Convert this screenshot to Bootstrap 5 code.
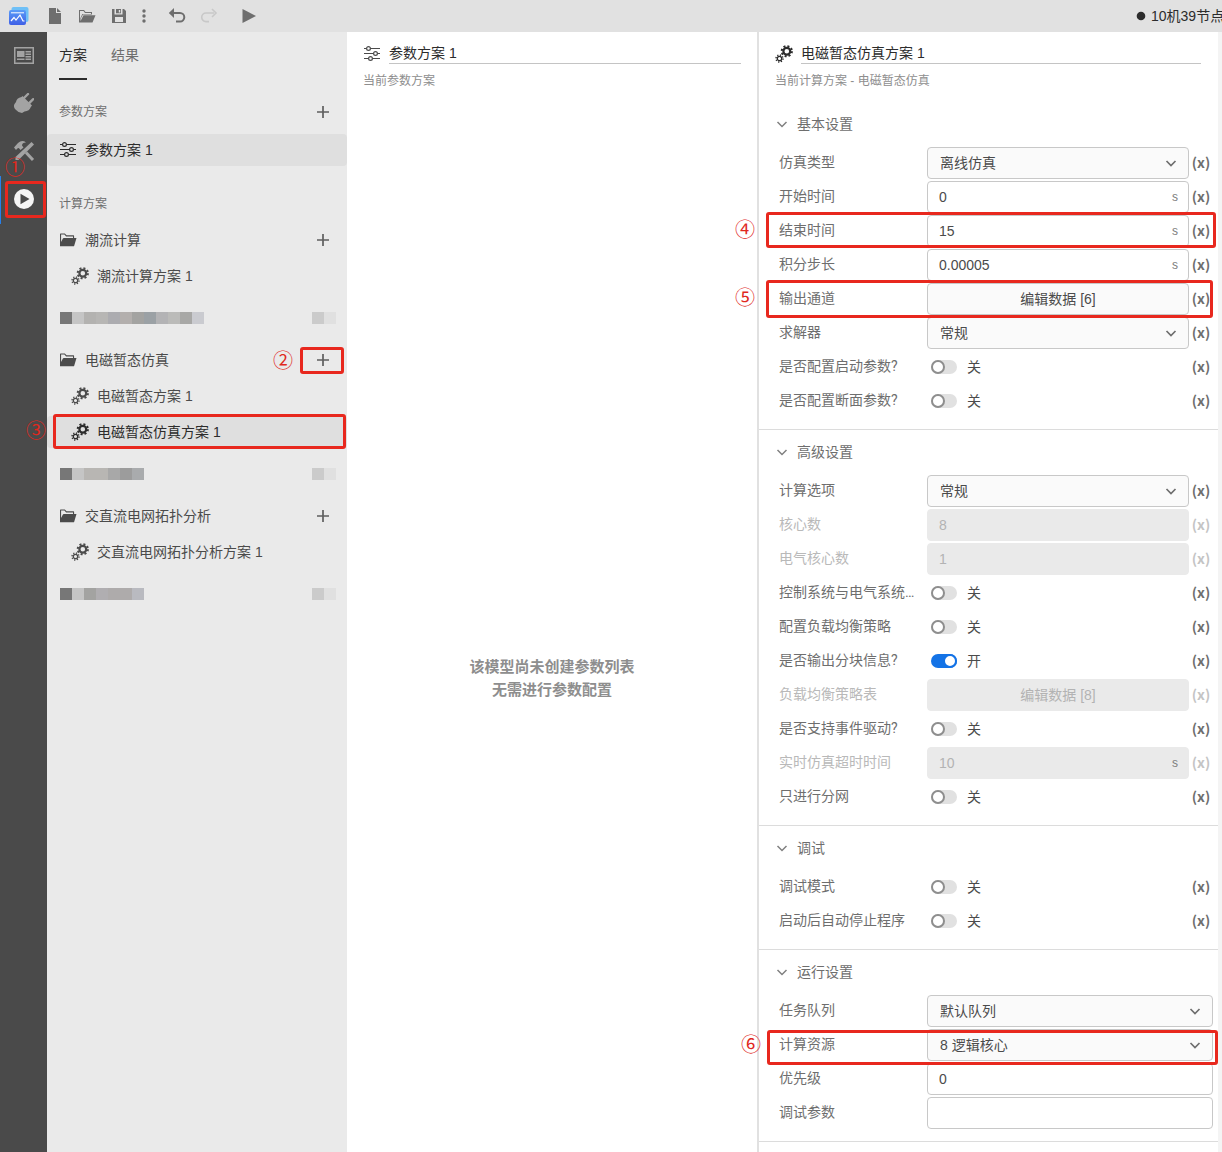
<!DOCTYPE html>
<html lang="zh-CN">
<head>
<meta charset="utf-8">
<meta name="viewport" content="width=device-width, initial-scale=1">
<title>10机39节点</title>
<link href="https://cdn.jsdelivr.net/npm/bootstrap@5.3.0/dist/css/bootstrap.min.css" rel="stylesheet">
<style>
body{font-family:"Liberation Sans","Noto Sans CJK SC",sans-serif;font-size:14px;line-height:20px;color:#4b4b4b;background:#fff}
svg{display:block;flex:none}
button{font-family:inherit}
.topbar{height:32px;background:#e1e1e1;color:#2c2c2c}
.tool{width:32px;height:32px;border:0;background:none;padding:0;display:flex;align-items:center;justify-content:center;color:#6e6e6e}
.tool-slim{width:18px}
.tool:disabled{color:#c8c8c8}
.logo-link{width:39px;padding-left:8px}
.doc-name{width:86px;gap:5px}
.doc-name span{white-space:nowrap}
.rail{width:47px;background:#4a4a4a}
.rail a{height:48px;color:#a3a3a3;display:flex;align-items:center;justify-content:center;position:relative;padding-bottom:2px}
.rail a.active{color:#f5f5f5;box-shadow:inset 1px 0 #2680eb}
.side{width:300px;background:#eaeaea}
.tabs{padding-left:12px;gap:24px}
.tabs a{height:48px;line-height:46px;color:#6e6e6e;text-decoration:none;border-bottom:2px solid transparent}
.tabs a.active{color:#2c2c2c;border-color:#2c2c2c}
.side-head{height:32px;margin-top:16px;padding:0 12px;font-size:12px;color:#6e6e6e}
.side-head-plans{margin-top:24px;padding-bottom:4px}
.plan{height:32px;margin:2px 0;padding-left:12px;gap:8px;border-radius:4px;color:inherit;text-decoration:none;display:flex;align-items:center;position:relative}
.plan-first{margin-top:6px}
.plan-sub{padding-left:24px}
.plan.active{background:#dfdfdf;color:#2c2c2c}
.side-group{margin-bottom:6px;display:flow-root}
.group-head{height:36px;padding:0 12px}
.masked{height:36px;padding:0 11px 0 13px;margin-bottom:6px}
.add{width:24px;height:24px;border:0;background:none;padding:0;color:#5f5f5f;display:flex;align-items:center;justify-content:center;position:relative}
.params{min-width:0;background:#fff}
.pane-head{padding:11px 16px 0}
.name-field{height:21px;border:0;border-bottom:1px solid #c4c4c4;border-radius:0;padding:0 0 2px;font-size:14px;color:#2c2c2c;background:none;min-width:0;flex:1}
.sub-note{font-size:12px;line-height:18px;margin-top:8px;color:#8e8e8e}
.above{flex:5}.below{flex:4}
.empty{font-size:15px;line-height:23px;padding-top:2px;color:#8e8e8e}
.config{width:465px;border-left:2px solid #e1e1e1;border-right:4px solid #f4f4f4;position:relative;z-index:1}
.config .pane-head{padding-right:17px;margin-bottom:12px}
.sect{padding:0 5px 12px 20px;border-bottom:1px solid #dcdcdc}
.sect-title{height:45px;border:0;background:none;padding:0 0 2px;gap:9px;color:#6e6e6e;font-size:14px;margin-left:-3px}
.field{height:32px;margin-bottom:2px;display:flex;align-items:center;position:relative}
.field:last-child{margin-bottom:0}
.field-name{width:136px;margin-right:12px;padding-bottom:2px;color:#6e6e6e;font-family:Roboto,"Noto Sans CJK SC",sans-serif}
.box{flex:1;min-width:0;height:32px;border:1px solid #c8c8c8;border-radius:4px;padding:0 11px;font-size:14px;line-height:20px;color:#4b4b4b;background-color:#fff}
select.box{background:#fafafa url("data:image/svg+xml,%3Csvg xmlns='http://www.w3.org/2000/svg' viewBox='0 0 12 12'%3E%3Cpath d='M1.500 4l4.500 4.500L10.500 4' fill='none' stroke='%236e6e6e' stroke-width='1.700'/%3E%3C/svg%3E") no-repeat right 11px center/12px;padding-left:12px}
button.box{background:#fafafa}
.box:disabled{background:#eaeaea;border-color:#eaeaea;color:#b3b3b3;opacity:1}
.unit-wrap{flex:1;min-width:0;position:relative;display:flex}
.unit{position:absolute;right:11px;top:6px;font-size:12px;color:#7c7c7c}
.toggle-wrap{flex:1;padding-left:4px;gap:10px}
.form-check-input.toggle{width:26px;height:14px;margin:0;border:0;border-radius:7px;background:#e1e1e1;position:relative;flex:none}
.toggle::before{content:"";position:absolute;left:0;top:0;width:14px;height:14px;border:2px solid #8e8e8e;border-radius:50%;background:#fff}
.form-check-input.toggle:checked{background:#1473e6}
.toggle:checked::before{left:12px;border-color:#1473e6}
.var-btn{width:24px;border:0;background:none;padding:0 0 2px;font:700 14px/20px "Noto Sans CJK SC",sans-serif;color:#6e6e6e}
.off .field-name{color:#b9b9b9}
.off .var-btn{color:#c4c4c4}
.hint-box{position:absolute;border:3px solid #e8281e;border-radius:3px;pointer-events:none;z-index:3}
.hint-no{position:absolute;font:20px/20px "Noto Sans CJK SC",sans-serif;color:#e0281e;z-index:3;pointer-events:none}
.box-run{inset:5px 1px 6px 5px}.no-run{left:5px;top:-19px}
.box-add{inset:-1px -9px -2px -11px}.no-add{right:42px;top:2px}
.box-plan{inset:-2px 1px -1px 6px}.no-plan{left:-21px;top:4px}
.box-end{inset:-3px -3px -1px -13px}
.box-out{inset:-3px 0 -3px -13px}
.box-res{inset:1px -5px -4px -12px}
.no-field{left:-44px;top:4px}
.no-res{left:-38px;top:5px}
</style>
</head>
<body class="d-flex flex-column min-vh-100">
<svg width="0" height="0" class="position-absolute" aria-hidden="true">
  <symbol id="gears" viewBox="0 0 18 18"><g fill="none" stroke="currentColor"><circle cx="11.800" cy="6.200" r="3.400" stroke-width="2.200"/><circle cx="11.800" cy="6.200" r="5.100" stroke-width="2" stroke-dasharray="2 2.005"/><circle cx="4.500" cy="13.500" r="2.200" stroke-width="1.300"/><circle cx="4.500" cy="13.500" r="3.500" stroke-width="1.400" stroke-dasharray="1.200 1.549"/></g></symbol>
  <symbol id="sliders" viewBox="0 0 18 18"><g fill="none" stroke="currentColor" stroke-width="1.200"><path d="M1 3.500h2.500M7.500 3.500H17M1 8.500h9.500M14.500 8.500H17M1 13.500h4.500M9.500 13.500H17"/><circle cx="5.500" cy="3.500" r="1.900"/><circle cx="12.500" cy="8.500" r="1.900"/><circle cx="7.500" cy="13.500" r="1.900"/></g></symbol>
  <symbol id="folder" viewBox="0 0 18 18"><path fill="currentColor" d="M1 15.300V3q0-.6.6-.6H5.800L7.600 4.300H14.500q.6 0 .6.600V7H14V5.400H7.100L5.400 3.500H2.100V11L3.900 7.500q.3-.5.900-.5H17.500L15.200 14.700q-.2.600-.9.600Z"/></symbol>
  <symbol id="plus" viewBox="0 0 12 12"><path d="M6 0v12M0 6h12" stroke="currentColor" stroke-width="1.700"/></symbol>
  <symbol id="chev" viewBox="0 0 12 12"><path d="M1.500 4L6 8.500 10.500 4" fill="none" stroke="#808080" stroke-width="1.500"/></symbol>
</svg>

<header class="topbar d-flex align-items-center">
  <a href="#" class="logo-link" aria-label="首页"><svg width="22" height="20" viewBox="0 0 22 20"><defs><linearGradient id="lg" x1="0" y1="0" x2="0" y2="1"><stop offset="0" stop-color="#5a9cf8"/><stop offset="1" stop-color="#3f5fe6"/></linearGradient></defs><rect x="3.500" y="1" width="17" height="15" rx="2" fill="#6fc0f7"/><rect x="1" y="4" width="17" height="15" rx="2" fill="url(#lg)"/><path d="M3 6.800h13" stroke="#fff" stroke-width="1"/><path d="M3 15l3-3.500 2 2.500 4-5 3 6h1.500" fill="none" stroke="#fff" stroke-width="1.200"/></svg></a>
  <button class="tool" aria-label="新建"><svg width="16" height="16" fill="currentColor"><path d="M2 0h7v5h5v11H2zM10 0l4 4h-4z"/></svg></button>
  <button class="tool" aria-label="打开"><svg width="18" height="16" fill="currentColor"><path d="M1 14.500V2h5l1.500 2H14v2.500H5L2.500 11V13L5.500 7.300H17.500L14.500 14.500ZM2 3v8l2.300-5H13V5H7L5.500 3Z" fill-rule="evenodd"/></svg></button>
  <button class="tool" aria-label="保存"><svg width="16" height="16" fill="currentColor"><path fill-rule="evenodd" d="M1 1h2.500v5.500h8V1H13l2 2v12H1zM5 1h5v4.300H5zM7.800 2v2.500h1.400V2zM4 9v5h8V9z"/></svg></button>
  <button class="tool tool-slim" aria-label="更多"><svg width="4" height="14" fill="currentColor"><circle cx="2" cy="2" r="1.700"/><circle cx="2" cy="7" r="1.700"/><circle cx="2" cy="12" r="1.700"/></svg></button>
  <button class="tool ms-2" aria-label="撤销"><svg width="18" height="16" fill="none" stroke="currentColor" stroke-width="2"><path d="M4 5h8a4.300 4.300 0 010 8.600H8"/><path d="M6 0v10L.8 5z" fill="currentColor" stroke="none"/></svg></button>
  <button class="tool" aria-label="重做" disabled><svg width="18" height="16" fill="none" stroke="currentColor" stroke-width="1.600"><path d="M14 5H6a4.300 4.300 0 000 8.600h3M12 1l4 4-4 4"/></svg></button>
  <button class="tool ms-2" aria-label="运行"><svg width="16" height="16" fill="currentColor"><path d="M1.500 1l13.500 7-13.500 7z"/></svg></button>
  <div class="doc-name d-flex align-items-center ms-auto overflow-hidden"><svg width="10" height="10"><circle cx="5" cy="5" r="4.300" fill="#2c2c2c"/></svg><span>10机39节点</span></div>
</header>

<div class="d-flex flex-grow-1">
  <nav class="rail flex-shrink-0" aria-label="主导航">
    <a href="#" aria-label="概览"><svg width="20" height="17" fill="currentColor"><path fill-rule="evenodd" d="M0 0h20v17H0zM1.500 1.500v14h17v-14z"/><path d="M3 4h7.500v6H3zM11.500 4H17v1.500h-5.500zM11.500 6.500H17V8h-5.500zM11.500 9H17v1.500h-5.500zM3 11.500h7.500V13H3zM11.500 11.500H17V13h-5.500z"/></svg></a>
    <a href="#" aria-label="接口"><svg width="20" height="20" fill="currentColor"><path d="M8.500 3L18 12.500 16.800 14Q15.500 18 10.500 18.500L8 20Q4 19.500 1.500 16.500T.5 11L2 9Q2.500 5 7.500 4z"/><path d="M10 5l4-4M15.200 10.200l4-4" stroke="currentColor" stroke-width="2.400" stroke-linecap="round"/></svg></a>
    <a href="#" aria-label="工具"><svg width="22" height="22" fill="currentColor"><path d="M1 7.500L5 3q4-3.500 8-.5Q9 2.500 9 5.500L10.500 7.500 7.500 10 5.800 8Q4.500 7.800 3 10z"/><path d="M18.500 2L21 4.500 5.500 20H2.500v-3z"/><path d="M13 12.500l7 7.500" stroke="currentColor" stroke-width="3"/></svg></a>
    <a href="#" class="active" aria-label="运行"><svg width="20" height="20"><circle cx="10" cy="10" r="10" fill="currentColor"/><path d="M6.500 4.800L15.500 10l-9 5.200z" fill="#4a4a4a"/></svg><span class="hint-box box-run"></span><span class="hint-no no-run">①</span></a>
  </nav>

  <aside class="side flex-shrink-0">
    <nav class="tabs d-flex"><a href="#" class="active">方案</a><a href="#">结果</a></nav>
    <div class="side-head d-flex align-items-center justify-content-between"><span>参数方案</span><button class="add" aria-label="新增参数方案"><svg width="12" height="12"><use href="#plus"/></svg></button></div>
    <a href="#" class="plan plan-first active"><svg width="18" height="18"><use href="#sliders"/></svg>参数方案 1</a>
    <div class="side-head side-head-plans d-flex align-items-center">计算方案</div>

    <div class="side-group">
      <div class="group-head d-flex align-items-center gap-2"><svg width="18" height="18"><use href="#folder"/></svg>潮流计算<button class="add ms-auto" aria-label="新增潮流计算方案"><svg width="12" height="12"><use href="#plus"/></svg></button></div>
      <a href="#" class="plan plan-sub"><svg width="18" height="18"><use href="#gears"/></svg>潮流计算方案 1</a>
    </div>
    <div class="masked d-flex align-items-center justify-content-between">
      <svg width="144" height="12"><path fill="#777" d="M0 0h12v12H0z"/><path fill="#c5c5c5" d="M12 0h12v12H12z"/><path fill="#b3b2b0" d="M24 0h12v12H24z"/><path fill="#b7b6b4" d="M36 0h12v12H36z"/><path fill="#acacb0" d="M48 0h12v12H48z"/><path fill="#b3afad" d="M60 0h12v12H60z"/><path fill="#a3a3a1" d="M72 0h12v12H72z"/><path fill="#9ba1a5" d="M84 0h12v12H84z"/><path fill="#b3b3b5" d="M96 0h12v12H96z"/><path fill="#bbbbb9" d="M108 0h12v12h-12z"/><path fill="#a8a8a6" d="M120 0h12v12h-12z"/><path fill="#cacbd0" d="M132 0h12v12h-12z"/></svg>
      <svg width="24" height="12"><path fill="#cbcbcb" d="M0 0h12v12H0z"/><path fill="#e0e0e0" d="M12 0h12v12H12z"/></svg>
    </div>
    <div class="side-group">
      <div class="group-head d-flex align-items-center gap-2"><svg width="18" height="18"><use href="#folder"/></svg>电磁暂态仿真<button class="add ms-auto" aria-label="新增电磁暂态仿真方案"><svg width="12" height="12"><use href="#plus"/></svg><span class="hint-box box-add"></span><span class="hint-no no-add">②</span></button></div>
      <a href="#" class="plan plan-sub"><svg width="18" height="18"><use href="#gears"/></svg>电磁暂态方案 1</a>
      <a href="#" class="plan plan-sub active mt-1"><svg width="18" height="18"><use href="#gears"/></svg>电磁暂态仿真方案 1<span class="hint-box box-plan"></span><span class="hint-no no-plan">③</span></a>
    </div>
    <div class="masked d-flex align-items-center justify-content-between">
      <svg width="84" height="12"><path fill="#777" d="M0 0h12v12H0z"/><path fill="#c5c5c5" d="M12 0h12v12H12z"/><path fill="#b8b6b3" d="M24 0h24v12H24z"/><path fill="#a8a8a8" d="M48 0h12v12H48z"/><path fill="#9c9c9c" d="M60 0h12v12H60z"/><path fill="#a9abad" d="M72 0h12v12H72z"/></svg>
      <svg width="24" height="12"><path fill="#cbcbcb" d="M0 0h12v12H0z"/><path fill="#e0e0e0" d="M12 0h12v12H12z"/></svg>
    </div>
    <div class="side-group">
      <div class="group-head d-flex align-items-center gap-2"><svg width="18" height="18"><use href="#folder"/></svg>交直流电网拓扑分析<button class="add ms-auto" aria-label="新增拓扑分析方案"><svg width="12" height="12"><use href="#plus"/></svg></button></div>
      <a href="#" class="plan plan-sub"><svg width="18" height="18"><use href="#gears"/></svg>交直流电网拓扑分析方案 1</a>
    </div>
    <div class="masked d-flex align-items-center justify-content-between">
      <svg width="84" height="12"><path fill="#777" d="M0 0h12v12H0z"/><path fill="#c5c5c5" d="M12 0h12v12H12z"/><path fill="#a3a3a1" d="M24 0h12v12H24z"/><path fill="#b0aeb1" d="M36 0h12v12H36z"/><path fill="#aeabab" d="M48 0h24v12H48z"/><path fill="#b9bac0" d="M72 0h12v12H72z"/></svg>
      <svg width="24" height="12"><path fill="#cbcbcb" d="M0 0h12v12H0z"/><path fill="#e0e0e0" d="M12 0h12v12H12z"/></svg>
    </div>
  </aside>

  <main class="params flex-fill d-flex flex-column">
    <div class="pane-head">
      <div class="d-flex align-items-center gap-2"><svg width="18" height="18"><use href="#sliders"/></svg><input class="name-field" value="参数方案 1" aria-label="参数方案名称"></div>
      <div class="sub-note">当前参数方案</div>
    </div>
    <div class="above"></div>
    <div class="empty text-center fw-bold">该模型尚未创建参数列表<br>无需进行参数配置</div>
    <div class="below"></div>
  </main>

  <section class="config flex-shrink-0">
    <div class="pane-head">
      <div class="d-flex align-items-center gap-2"><svg width="18" height="18" color="#2c2c2c"><use href="#gears"/></svg><input class="name-field" value="电磁暂态仿真方案 1" aria-label="计算方案名称"></div>
      <div class="sub-note">当前计算方案 - 电磁暂态仿真</div>
    </div>

    <div class="sect">
      <button class="sect-title d-flex align-items-center"><svg width="12" height="12"><use href="#chev"/></svg>基本设置</button>
      <div>
        <div class="field"><label class="field-name text-truncate" for="f1">仿真类型</label><select class="form-select box" id="f1"><option>离线仿真</option></select><button class="var-btn">(x)</button></div>
        <div class="field"><label class="field-name text-truncate" for="f2">开始时间</label><div class="unit-wrap"><input class="form-control box" id="f2" value="0"><span class="unit">s</span></div><button class="var-btn">(x)</button></div>
        <div class="field"><label class="field-name text-truncate" for="f3">结束时间</label><div class="unit-wrap"><input class="form-control box" id="f3" value="15"><span class="unit">s</span></div><button class="var-btn">(x)</button><span class="hint-box box-end"></span><span class="hint-no no-field">④</span></div>
        <div class="field"><label class="field-name text-truncate" for="f4">积分步长</label><div class="unit-wrap"><input class="form-control box" id="f4" value="0.00005"><span class="unit">s</span></div><button class="var-btn">(x)</button></div>
        <div class="field"><label class="field-name text-truncate" for="f5">输出通道</label><button class="box" id="f5">编辑数据 [6]</button><button class="var-btn">(x)</button><span class="hint-box box-out"></span><span class="hint-no no-field">⑤</span></div>
        <div class="field"><label class="field-name text-truncate" for="f6">求解器</label><select class="form-select box" id="f6"><option>常规</option></select><button class="var-btn">(x)</button></div>
        <div class="field"><label class="field-name text-truncate" for="f7">是否配置启动参数?</label><div class="toggle-wrap d-flex align-items-center"><input type="checkbox" role="switch" class="form-check-input toggle" id="f7"><span>关</span></div><button class="var-btn">(x)</button></div>
        <div class="field"><label class="field-name text-truncate" for="f8">是否配置断面参数?</label><div class="toggle-wrap d-flex align-items-center"><input type="checkbox" role="switch" class="form-check-input toggle" id="f8"><span>关</span></div><button class="var-btn">(x)</button></div>
      </div>
    </div>

    <div class="sect">
      <button class="sect-title d-flex align-items-center"><svg width="12" height="12"><use href="#chev"/></svg>高级设置</button>
      <div>
        <div class="field"><label class="field-name text-truncate" for="g1">计算选项</label><select class="form-select box" id="g1"><option>常规</option></select><button class="var-btn">(x)</button></div>
        <div class="field off"><label class="field-name text-truncate" for="g2">核心数</label><input class="form-control box" id="g2" value="8" disabled><button class="var-btn" disabled>(x)</button></div>
        <div class="field off"><label class="field-name text-truncate" for="g3">电气核心数</label><input class="form-control box" id="g3" value="1" disabled><button class="var-btn" disabled>(x)</button></div>
        <div class="field"><label class="field-name text-truncate" for="g4">控制系统与电气系统…</label><div class="toggle-wrap d-flex align-items-center"><input type="checkbox" role="switch" class="form-check-input toggle" id="g4"><span>关</span></div><button class="var-btn">(x)</button></div>
        <div class="field"><label class="field-name text-truncate" for="g5">配置负载均衡策略</label><div class="toggle-wrap d-flex align-items-center"><input type="checkbox" role="switch" class="form-check-input toggle" id="g5"><span>关</span></div><button class="var-btn">(x)</button></div>
        <div class="field"><label class="field-name text-truncate" for="g6">是否输出分块信息?</label><div class="toggle-wrap d-flex align-items-center"><input type="checkbox" role="switch" class="form-check-input toggle" id="g6" checked><span>开</span></div><button class="var-btn">(x)</button></div>
        <div class="field off"><label class="field-name text-truncate" for="g7">负载均衡策略表</label><button class="box" id="g7" disabled>编辑数据 [8]</button><button class="var-btn" disabled>(x)</button></div>
        <div class="field"><label class="field-name text-truncate" for="g8">是否支持事件驱动?</label><div class="toggle-wrap d-flex align-items-center"><input type="checkbox" role="switch" class="form-check-input toggle" id="g8"><span>关</span></div><button class="var-btn">(x)</button></div>
        <div class="field off"><label class="field-name text-truncate" for="g9">实时仿真超时时间</label><div class="unit-wrap"><input class="form-control box" id="g9" value="10" disabled><span class="unit">s</span></div><button class="var-btn" disabled>(x)</button></div>
        <div class="field"><label class="field-name text-truncate" for="g10">只进行分网</label><div class="toggle-wrap d-flex align-items-center"><input type="checkbox" role="switch" class="form-check-input toggle" id="g10"><span>关</span></div><button class="var-btn">(x)</button></div>
      </div>
    </div>

    <div class="sect">
      <button class="sect-title d-flex align-items-center"><svg width="12" height="12"><use href="#chev"/></svg>调试</button>
      <div>
        <div class="field"><label class="field-name text-truncate" for="h1">调试模式</label><div class="toggle-wrap d-flex align-items-center"><input type="checkbox" role="switch" class="form-check-input toggle" id="h1"><span>关</span></div><button class="var-btn">(x)</button></div>
        <div class="field"><label class="field-name text-truncate" for="h2">启动后自动停止程序</label><div class="toggle-wrap d-flex align-items-center"><input type="checkbox" role="switch" class="form-check-input toggle" id="h2"><span>关</span></div><button class="var-btn">(x)</button></div>
      </div>
    </div>

    <div class="sect">
      <button class="sect-title d-flex align-items-center"><svg width="12" height="12"><use href="#chev"/></svg>运行设置</button>
      <div>
        <div class="field"><label class="field-name text-truncate" for="k1">任务队列</label><select class="form-select box" id="k1"><option>默认队列</option></select></div>
        <div class="field"><label class="field-name text-truncate" for="k2">计算资源</label><select class="form-select box" id="k2"><option>8 逻辑核心</option></select><span class="hint-box box-res"></span><span class="hint-no no-res">⑥</span></div>
        <div class="field"><label class="field-name text-truncate" for="k3">优先级</label><input class="form-control box" id="k3" value="0"></div>
        <div class="field"><label class="field-name text-truncate" for="k4">调试参数</label><input class="form-control box" id="k4" value=""></div>
      </div>
    </div>
  </section>
</div>
<script src="https://cdn.jsdelivr.net/npm/bootstrap@5.3.0/dist/js/bootstrap.bundle.min.js"></script>
</body>
</html>
